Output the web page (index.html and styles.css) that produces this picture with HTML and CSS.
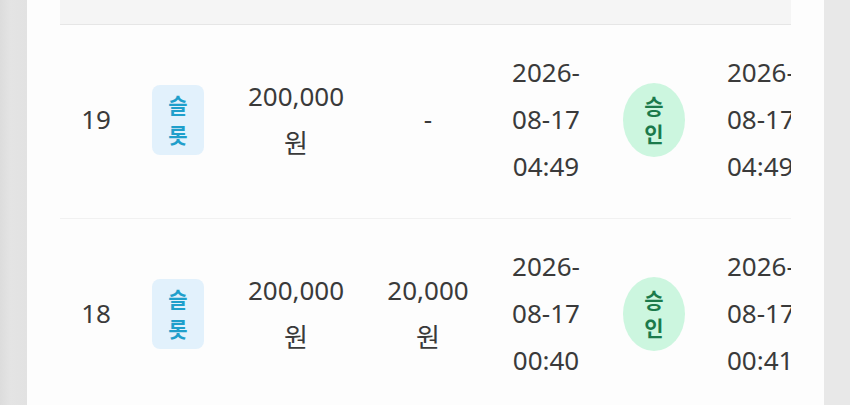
FILE: index.html
```html
<!DOCTYPE html>
<html lang="ko">
<head>
	<meta charset="UTF-8">
	<title>충전 내역</title>
	<link rel="stylesheet" href="styles.css">
</head>
<body>
	<div class="page">
		<div class="side side-left"></div>
		<div class="card">
			<div class="tableWrap">
				<table class="history">
					<thead>
						<tr><th class="cNo"></th><th class="cType"></th><th class="cAmount"></th><th class="cBonus"></th><th class="cDate"></th><th class="cState"></th><th class="cDone"></th></tr>
					</thead>
					<tbody>
						<tr>
							<td>19</td>
							<td><span class="typeBadge">슬롯</span></td>
							<td>200,000 원</td>
							<td>-</td>
							<td>2026-08-17 04:49</td>
							<td><span class="stateBadge">승인</span></td>
							<td>2026-08-17 04:49</td>
						</tr>
						<tr>
							<td>18</td>
							<td><span class="typeBadge">슬롯</span></td>
							<td>200,000 원</td>
							<td>20,000 원</td>
							<td>2026-08-17 00:40</td>
							<td><span class="stateBadge">승인</span></td>
							<td>2026-08-17 00:41</td>
						</tr>
					</tbody>
				</table>
			</div>
		</div>
		<div class="side side-right"></div>
	</div>
</body>
</html>
```

FILE: styles.css
```css
html, body{
	margin: 0;
	height: 100%;
	background: #fdfdfd;
}
body{
	font-family: "Noto Sans", "Noto Sans CJK KR", sans-serif;
	color: #3a3a3a;
}
.page{
	display: flex;
	height: 405px;
	overflow: hidden;
}
.side{
	flex: none;
}
.side-left{
	width: 27px;
	background: linear-gradient(to right, #dcdcdc, #e4e4e4 40%, #e2e2e2);
}
.side-right{
	width: 26px;
	background: #e8e8e8;
}
.card{
	flex: 1;
	padding: 0 33px;
	background: #fdfdfd;
	overflow: hidden;
}
.tableWrap{
	overflow: hidden;
}
.history{
	border-collapse: collapse;
	table-layout: fixed;
	width: 759px;
}
.history th{
	height: 24px;
	padding: 0;
	background: #f5f5f5;
	border-bottom: 1px solid #e6e6e6;
}
.cNo{ width: 72px; }
.cType{ width: 92px; }
.cAmount{ width: 144px; }
.cBonus{ width: 120px; }
.cDate{ width: 116px; }
.cState{ width: 100px; }
.cDone{ width: 115px; }
.history td{
	padding: 24px 16px 28px;
	font-size: 26px;
	line-height: 47px;
	text-align: center;
	vertical-align: middle;
	border-bottom: 1px solid #f1f1f1;
}
/* last column is cut by the scroll area */
.history td:last-child{
	padding-left: 23px;
	padding-right: 0;
	text-align: left;
}
.typeBadge{
	display: inline-block;
	box-sizing: border-box;
	width: 52px;
	padding: 5px 14px;
	font-size: 21px;
	font-weight: 700;
	line-height: 30px;
	color: #1f9fcb;
	background: #e2f1fc;
	border-radius: 8px;
	vertical-align: middle;
}
.stateBadge{
	display: inline-block;
	box-sizing: border-box;
	width: 62px;
	padding: 9px 16px;
	font-size: 21px;
	font-weight: 700;
	line-height: 28px;
	color: #1b7a4b;
	background: #ccf6df;
	border-radius: 50%;
	vertical-align: middle;
}
```
